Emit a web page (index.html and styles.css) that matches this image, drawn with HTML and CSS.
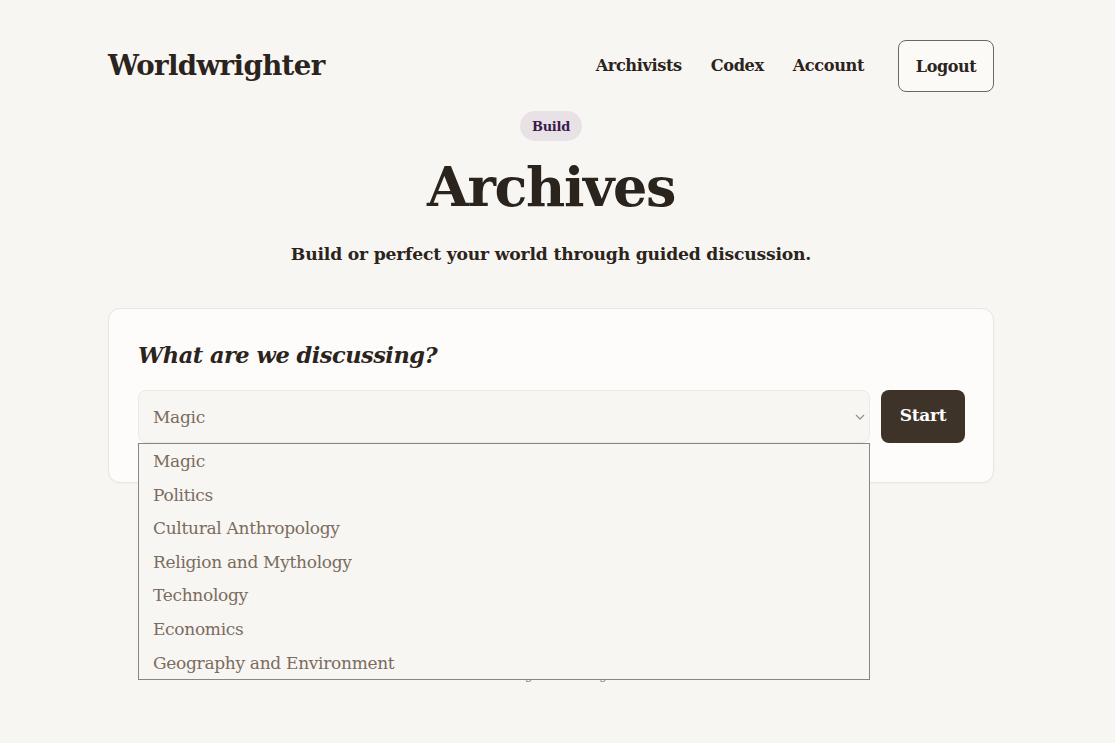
FILE: index.html
```html
<!DOCTYPE html>
<html lang="en">
<head>
<meta charset="utf-8">
<title>Worldwrighter — Archives</title>
<link rel="stylesheet" href="styles.css">
</head>
<body>
<div class="page">
  <header class="topbar">
    <div class="logo">Worldwrighter</div>
    <nav class="nav">
      <a class="nav-link" href="#">Archivists</a>
      <a class="nav-link" href="#">Codex</a>
      <a class="nav-link" href="#">Account</a>
      <button class="logout">Logout</button>
    </nav>
  </header>

  <section class="hero">
    <span class="pill">Build</span>
    <h1 class="title">Archives</h1>
    <p class="subtitle">Build or perfect your world through guided discussion.</p>
  </section>

  <section class="card">
    <h2 class="card-title">What are we discussing?</h2>
    <div class="form-row">
      <div class="select-wrap">
        <div class="select">
          <span class="select-value">Magic</span>
          <svg class="chevron" width="10" height="6" viewBox="0 0 10 6"><path d="M1 1l4 4 4-4" fill="none" stroke="#9a9590" stroke-width="1.3"/></svg>
        </div>
        <ul class="dropdown">
          <li>Magic</li>
          <li>Politics</li>
          <li>Cultural Anthropology</li>
          <li>Religion and Mythology</li>
          <li>Technology</li>
          <li>Economics</li>
          <li>Geography and Environment</li>
        </ul>
      </div>
      <button class="start">Start</button>
    </div>
  </section>

  <footer class="footer">© 2025 Worldwrighter · All rights reserved</footer>
</div>
</body>
</html>
```
FILE: styles.css
```css
* { box-sizing: border-box; }
html, body { margin: 0; padding: 0; }
body {
  background: #f8f6f2;
  color: #2b241d;
  font-family: "DejaVu Serif", "Liberation Serif", serif;
  padding-right: 13px;
}
.page {
  width: 886px;
  margin: 0 auto;
  padding-top: 39px;
}
.topbar {
  display: flex;
  align-items: center;
  justify-content: space-between;
  height: 53px;
}
.logo {
  font-size: 27.6px;
  font-weight: bold;
  letter-spacing: -0.6px;
  color: #2b241d;
}
.nav {
  display: flex;
  align-items: center;
}
.nav-link {
  font-size: 16.2px;
  font-weight: bold;
  color: #2b241d;
  text-decoration: none;
  margin-right: 29px;
  letter-spacing: -0.4px;
}
.nav-link:nth-child(3) { margin-right: 34px; }
.logout {
  width: 96px;
  height: 52px;
  background: #fbfaf7;
  border: 1px solid #6e6660;
  border-radius: 8px;
  font-family: inherit;
  font-size: 16px;
  font-weight: bold;
  color: #2b241d;
  letter-spacing: -0.4px;
  padding-top: 3px;
}
.hero {
  display: flex;
  flex-direction: column;
  align-items: center;
  margin-top: 19px;
}
.pill {
  background: #e8e2e6;
  color: #3a1b4c;
  font-size: 13px;
  font-weight: bold;
  border-radius: 15px;
  padding: 0 12px;
  height: 30px;
  line-height: 31px;
  letter-spacing: -0.3px;
}
.title {
  margin: 10px 0 0;
  font-size: 54px;
  line-height: 72px;
  font-weight: bold;
  letter-spacing: -1.4px;
  color: #2b241d;
}
.subtitle {
  margin: 21px 0 0;
  font-size: 17.2px;
  font-weight: bold;
  letter-spacing: -0.2px;
  color: #2b241d;
}
.card {
  margin-top: 44px;
  background: #fdfcfa;
  border: 1px solid #ebe5dd;
  border-radius: 12px;
  padding: 30px 28px 39px 29px;
  box-shadow: 0 1px 2px rgba(0,0,0,0.03);
}
.card-title {
  margin: 0 0 19px;
  font-size: 22.5px;
  font-style: italic;
  font-weight: bold;
  letter-spacing: -0.5px;
  color: #2b241d;
  line-height: 32px;
}
.form-row {
  display: flex;
  gap: 11px;
}
.select-wrap {
  position: relative;
  flex: 1;
}
.select {
  height: 53px;
  background: #f8f6f2;
  border: 1px solid #eee9e2;
  border-radius: 8px;
  display: flex;
  align-items: center;
  justify-content: space-between;
  padding: 0 4px 0 14px;
}
.select-value {
  font-size: 17px;
  color: #7a6c5f;
  letter-spacing: -0.3px;
}
.chevron { margin-top: 1px; }
.dropdown {
  position: absolute;
  left: 0;
  right: 0;
  top: 53px;
  margin: 0;
  padding: 3px 0 0;
  list-style: none;
  background: #f8f6f2;
  border: 1px solid #8a8581;
  height: 237px;
  z-index: 10;
}
.dropdown li {
  height: 33.6px;
  line-height: 28px;
  padding-left: 14px;
  font-size: 17px;
  color: #7a6c5f;
  letter-spacing: -0.3px;
}
.start {
  width: 84px;
  height: 53px;
  background: #3e3328;
  color: #fff;
  border: none;
  border-radius: 8px;
  font-family: inherit;
  font-size: 17px;
  font-weight: bold;
  letter-spacing: -0.3px;
  padding-bottom: 4px;
}
.footer {
  margin-top: 185px;
  text-align: center;
  font-size: 12px;
  color: #8a8178;
}
```
